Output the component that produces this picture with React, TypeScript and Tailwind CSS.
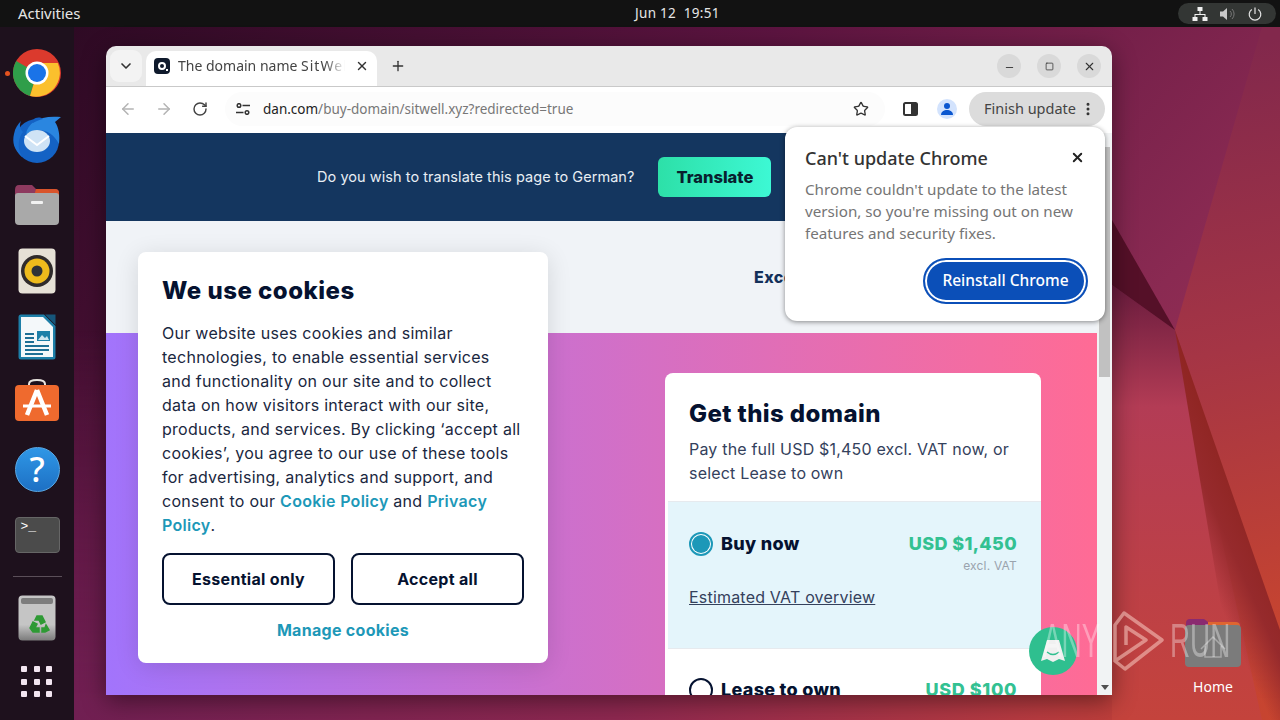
import React from "react";
import { ArrowLeft, ArrowRight, ChevronDown, Minus, MoreVertical, Plus, RotateCw, Square, Star, X } from "lucide-react";

const uiFont = "font-['Noto_Sans',sans-serif]";
const pageFont = "font-['Inter',sans-serif]";

const ChromeIcon = () => (
  <svg width="48" height="48" viewBox="0 0 48 48">
    <circle cx="24" cy="24" r="24" fill="#db3a2d" />
    <path d="M24 24 L3.2 12 A24 24 0 0 0 17 47 Z" fill="#2f9e4a" />
    <path d="M24 14 H44.8 A24 24 0 0 1 17 47 L24 24 Z" fill="#fbc02d" />
    <circle cx="24" cy="24" r="11.5" fill="#fff" />
    <circle cx="24" cy="24" r="9" fill="#1a73e8" />
  </svg>
);

const ThunderbirdIcon = () => (
  <svg width="50" height="50" viewBox="0 0 50 50">
    <circle cx="25" cy="27" r="22" fill="#1462c4" />
    <path d="M9 7 C7 12 8 15 11 18 C6 24 5 34 10 43 C2 36 0 28 2 20 C3 14 6 10 9 7 Z" fill="#1a6fd0" />
    <path d="M14 20 C16 8 28 1 49 3 L43 8 C47 14 48 22 47 30 C40 16 26 12 14 20 Z" fill="#2a86e0" />
    <path d="M21 6 C24 3 28 3 31 5 C27 6 24 7 21 9 Z" fill="#1462c4" />
    <ellipse cx="25" cy="27" rx="13" ry="11" fill="#cfe3f5" />
    <path d="M13 22 L25 31 L37 22" fill="none" stroke="#ffffff" strokeWidth="2" />
  </svg>
);

const FilesIcon = () => (
  <svg width="46" height="42" viewBox="0 0 46 42">
    <path d="M1 6 Q1 1 5 1 H18 L22 5 H41 Q45 5 45 9 V20 H1 Z" fill="#8e3a5f" />
    <path d="M22 5 H41 Q45 5 45 9 V12 H20 Z" fill="#d9542b" />
    <path d="M1 12 Q1 9 4 9 H42 Q45 9 45 12 V37 Q45 41 41 41 H5 Q1 41 1 37 Z" fill="#a9a9a9" />
    <rect x="17" y="17" width="12" height="3" rx="1" fill="#f2f2f2" />
  </svg>
);

const RhythmboxIcon = () => (
  <svg width="38" height="46" viewBox="0 0 38 46">
    <rect width="37" height="45" x="0.5" y="0.5" rx="4" fill="#e6e1d6" />
    <circle cx="19" cy="23" r="16" fill="#2f2b2b" />
    <circle cx="19" cy="23" r="12.5" fill="#eebb1c" />
    <circle cx="19" cy="23" r="5.5" fill="#2e3238" />
  </svg>
);

const WriterIcon = () => (
  <svg width="38" height="46" viewBox="0 0 38 46">
    <path d="M3 0.5 H26 L37.5 12 V43 Q37.5 45.5 35 45.5 H3 Q0.5 45.5 0.5 43 V3 Q0.5 0.5 3 0.5 Z" fill="#1d7fa8" />
    <path d="M3 3 H25 L35 13 V43 H3 Z" fill="#f4f8fa" />
    <path d="M27 0.5 L37.5 11 V0.5 Z" fill="#16567a" />
    <rect x="19" y="17" width="13" height="10" fill="#1d7fa8" />
    <path d="M20 26 L24 21 L27 24 L29 22 L31 26 Z" fill="#cfe6f0" />
    <path d="M7 20h9M7 24h9M7 28h9M7 32h24M7 36h24M7 40h18" stroke="#1d6f95" strokeWidth="2" />
  </svg>
);

const AppCenterIcon = () => (
  <svg width="46" height="42" viewBox="0 0 46 42">
    <path d="M15 7 V5 Q15 1 23 1 Q31 1 31 5 V7" fill="none" stroke="#e8e4df" strokeWidth="2" />
    <rect x="1" y="6" width="44" height="36" rx="4" fill="#ef6a2e" />
    <path d="M23 11 L13 36 M23 11 L33 36" stroke="#fff" strokeWidth="4.500" />
    <path d="M9 27 H37" stroke="#fff" strokeWidth="3" />
  </svg>
);

const TrashIcon = () => (
  <svg width="38" height="46" viewBox="0 0 38 46">
    <defs>
      <linearGradient id="trash" x1="0" y1="0" x2="0" y2="1">
        <stop offset="0.65" stopColor="#c5c5c5" />
        <stop offset="1" stopColor="#7b7b7b" />
      </linearGradient>
    </defs>
    <rect x="0.5" y="0.5" width="37" height="45" rx="4" fill="url(#trash)" />
    <rect x="3" y="3" width="32" height="6" rx="2" fill="#7d7d7d" />
    <path d="M19 21 L24 21 L27 27 L23 29 L21 25 L17 25 Z M12 33 L15 27 L19 29 L17 33 L21 33 L21 37 L15 37 Z M28 30 L31 35 L27 37 L24 37 L24 33 L27 33 Z" fill="#2f9a35" stroke="#2f9a35" strokeWidth="1.5" />
  </svg>
);

const DockItem = ({ children, className = "h-[66px]" }: { children: React.ReactNode; className?: string }) => (
  <div className={`flex items-center justify-center ${className}`}>{children}</div>
);

const Dock = () => (
  <div className="relative flex w-[74px] shrink-0 flex-col bg-[#1e111d] pt-[13px]">
    <div className="absolute left-[5px] top-[44px] h-[5px] w-[5px] rounded-full bg-[#e5531f]" />
    <DockItem><ChromeIcon /></DockItem>
    <DockItem><ThunderbirdIcon /></DockItem>
    <DockItem><FilesIcon /></DockItem>
    <DockItem><RhythmboxIcon /></DockItem>
    <DockItem><WriterIcon /></DockItem>
    <DockItem className="h-[66px] pb-[6px]"><AppCenterIcon /></DockItem>
    <DockItem>
      <div className={`flex h-[45px] w-[45px] items-center justify-center rounded-full border border-[#5aa9e6] bg-[linear-gradient(#2f97e6,#1d70c4)] text-[34px] font-medium text-white ${uiFont}`}>?</div>
    </DockItem>
    <DockItem>
      <div className="h-[36px] w-[45px] rounded-[4px] border border-[#666] bg-[#4b4b4b] pl-[5px] pt-[1px] font-['Liberation_Mono',monospace] text-[13px] leading-[16px] text-white">&gt;_</div>
    </DockItem>
    <div className="mx-auto mt-[8px] h-px w-[49px] bg-[#5b4f59]" />
    <DockItem className="mt-[8px] h-[66px]"><TrashIcon /></DockItem>
    <div className="mt-[15px] grid h-[32px] w-[32px] grid-cols-3 gap-[6px] self-center">
      {Array.from({ length: 9 }).map((_, i) => (
        <div key={i} className="h-[6px] w-[6px] rounded-[1px] bg-[#f3e6f1]" />
      ))}
    </div>
  </div>
);

const TopBar = () => (
  <div className={`relative flex h-[27px] shrink-0 items-center justify-between bg-[#121212] pl-[18px] pr-[4px] text-[13.5px] text-[#e6e6e6] ${uiFont}`}>
    <span className="text-[15px]">Activities</span>
    <span className="absolute left-[635px] tracking-[0.3px]">Jun 12&nbsp; 19:51</span>
    <div className="flex h-[21px] w-[98px] items-center justify-between rounded-full bg-[#333634] px-[14px]">
      <svg width="16" height="14" viewBox="0 0 16 14" fill="#f0f0f0">
        <rect x="5.5" y="0" width="5" height="4" />
        <rect x="0.5" y="10" width="5" height="4" />
        <rect x="10.5" y="10" width="5" height="4" />
        <path d="M7.5 4h1v3h5v3h-1V8H3.500v2h-1V7h5z" />
      </svg>
      <svg width="16" height="14" viewBox="0 0 16 14">
        <path d="M0 4.500h3L7 1v12L3 9.500H0z" fill="#c9c9c9" />
        <path d="M10 4a4 4 0 0 1 0 6M12 2a7 7 0 0 1 0 10" fill="none" stroke="#777" />
      </svg>
      <svg width="14" height="14" viewBox="0 0 14 14" fill="none" stroke="#e6e6e6" strokeWidth="1.2">
        <path d="M7 0.500V7M3.800 2.500a5.800 5.800 0 1 0 6.400 0" />
      </svg>
    </div>
  </div>
);

const Wallpaper = () => (
  <svg className="absolute inset-0 h-full w-full" viewBox="74 27 1206 693" preserveAspectRatio="none">
    <defs>
      <linearGradient id="wall" x1="0" y1="0" x2="1" y2="0.55">
        <stop offset="0" stopColor="#2e0a24" />
        <stop offset="0.45" stopColor="#5c1440" />
        <stop offset="0.85" stopColor="#8a2a52" />
        <stop offset="1" stopColor="#963054" />
      </linearGradient>
      <linearGradient id="wallBottom" gradientUnits="userSpaceOnUse" x1="74" y1="0" x2="1280" y2="0">
        <stop offset="0" stopColor="#701f52" />
        <stop offset="0.45" stopColor="#8e2850" />
        <stop offset="0.8" stopColor="#b83b40" />
        <stop offset="1" stopColor="#c8452f" />
      </linearGradient>
      <linearGradient id="fadeDown" gradientUnits="userSpaceOnUse" x1="0" y1="330" x2="0" y2="700">
        <stop offset="0" stopColor="#000" />
        <stop offset="1" stopColor="#fff" />
      </linearGradient>
      <mask id="bottomMask" maskUnits="userSpaceOnUse" x="74" y="27" width="1206" height="693">
        <rect x="74" y="27" width="1206" height="693" fill="url(#fadeDown)" />
      </mask>
      <linearGradient id="wallRight" gradientUnits="userSpaceOnUse" x1="1170" y1="60" x2="1290" y2="640">
        <stop offset="0" stopColor="#82284c" />
        <stop offset="0.5" stopColor="#a53545" />
        <stop offset="1" stopColor="#c8452f" />
      </linearGradient>
      <linearGradient id="wallPink" x1="0" y1="0" x2="0" y2="1">
        <stop offset="0" stopColor="#6a1c3e" />
        <stop offset="0.28" stopColor="#b33c55" />
        <stop offset="1" stopColor="#c4433c" />
      </linearGradient>
      <linearGradient id="band" gradientUnits="userSpaceOnUse" x1="1200" y1="560" x2="1268" y2="530">
        <stop offset="0" stopColor="#962a2c" stopOpacity="0" />
        <stop offset="0.45" stopColor="#962a2c" />
        <stop offset="1" stopColor="#8e2420" />
      </linearGradient>
    </defs>
    <rect x="74" y="27" width="1206" height="693" fill="url(#wall)" />
    <rect x="74" y="27" width="1206" height="693" fill="url(#wallBottom)" mask="url(#bottomMask)" />
    <polygon points="1262,27 1280,27 1280,640 1175,330" fill="url(#wallRight)" />
    <polygon points="1112,285 1175,330 1262,720 1112,720" fill="url(#wallPink)" />
    <polygon points="1175,330 1280,630 1280,720 1240,720" fill="url(#band)" />
    <polygon points="1112,220 1175,330 1112,285" fill="#551028" />
  </svg>
);

const TabStrip = () => (
  <div className={`flex h-[41px] shrink-0 items-end border-b border-[#c9c9c9] bg-[#e9e9e9] pl-[4px] ${uiFont}`}>
    <div className="mb-[4px] flex h-[32px] w-[32px] items-center justify-center rounded-[9px] bg-[#f3f3f3]">
      <ChevronDown size={16} strokeWidth={2.5} className="text-[#333]" />
    </div>
    <div className="ml-[4px] flex h-[35px] w-[231px] items-center rounded-t-[10px] bg-white pb-[6px] pl-[8px] pr-[7px]">
      <div className="relative flex h-[16px] w-[16px] shrink-0 items-center justify-center rounded-[4px] bg-[#0f1a2c]">
        <div className="h-[8px] w-[8px] rounded-full border-2 border-white" />
        <div className="absolute bottom-[3px] right-[2px] h-[2px] w-[2px] bg-white" />
      </div>
      <div className="ml-[8px] w-[167px] overflow-hidden whitespace-nowrap text-[14px] text-[#444] [mask-image:linear-gradient(to_right,#000_88%,transparent)]">The domain name <span className="tracking-[1px]">SitWell.xyz</span> is for sale</div>
      <X size={14} strokeWidth={2.5} className="ml-[10px] shrink-0 text-[#333]" />
    </div>
    <div className="mb-[12px] ml-[13px]">
      <Plus size={16} strokeWidth={2} className="text-[#333]" />
    </div>
    <div className="mb-[8px] ml-auto mr-[11px] flex gap-[16px]">
      <div className="flex h-[24px] w-[24px] items-center justify-center rounded-full bg-[#d9d9d9]"><Minus size={11} className="mt-[3px] text-[#333]" /></div>
      <div className="flex h-[24px] w-[24px] items-center justify-center rounded-full bg-[#d9d9d9]"><Square size={9} className="text-[#333]" /></div>
      <div className="flex h-[24px] w-[24px] items-center justify-center rounded-full bg-[#d9d9d9]"><X size={13} className="text-[#333]" /></div>
    </div>
  </div>
);

const Toolbar = () => (
  <div className={`flex h-[46px] shrink-0 items-center bg-white pb-[2px] pl-[13px] pr-[7px] ${uiFont}`}>
    <ArrowLeft size={18} className="text-[#b4b4b4]" />
    <ArrowRight size={18} className="ml-[18px] text-[#b4b4b4]" />
    <RotateCw size={16} strokeWidth={2.2} className="ml-[19px] text-[#444]" />
    <div className="ml-[17px] flex h-[34px] w-[660px] items-center rounded-full bg-[#fcfcfc] pl-[11px] pr-[16px]">
      <svg width="14" height="12" viewBox="0 0 14 12" fill="none" stroke="#333" strokeWidth="1.5">
        <circle cx="3" cy="2.500" r="1.800" />
        <path d="M6.500 2.500H14M0 9.500h7.500" />
        <circle cx="11" cy="9.500" r="1.800" />
      </svg>
      <span className="ml-[13px] text-[13.5px] text-[#777]"><span className="text-[#222]">dan.com</span>/buy-domain/sitwell.xyz?redirected=true</span>
      <Star size={16} strokeWidth={2} className="ml-auto text-[#333]" />
    </div>
    <svg className="ml-[18px]" width="15" height="14" viewBox="0 0 15 14">
      <rect x="1" y="1" width="13" height="12" rx="1.500" fill="#fff" stroke="#333" strokeWidth="2" />
      <rect x="8" y="1" width="6" height="12" fill="#333" />
    </svg>
    <div className="ml-[19px] flex h-[20px] w-[20px] items-center justify-center rounded-full bg-[#d3e3fd]">
      <svg width="14" height="14" viewBox="0 0 14 14" fill="#0b57d0">
        <circle cx="7" cy="4" r="3" />
        <path d="M1 13c0-3.500 3-5 6-5s6 1.500 6 5z" />
      </svg>
    </div>
    <div className="ml-[12px] flex h-[34px] w-[136px] items-center rounded-full bg-[#dcdcdc] pl-[15px] text-[14.5px] text-[#444]">
      Finish update
      <MoreVertical size={16} strokeWidth={2.5} className="ml-[4px] text-[#333]" />
    </div>
  </div>
);

const Scrollbar = () => (
  <div className="flex w-[15px] shrink-0 flex-col items-center bg-[#f1f3f4] pt-[14px]">
    <div className="h-[230px] w-[11px] bg-[#c1c1c1]" />
    <div className="mb-[5px] mt-auto h-0 w-0 border-x-[4px] border-t-[5px] border-x-transparent border-t-[#505050]" />
  </div>
);

const DomainCard = () => (
  <div className="h-[400px] w-[376px] shrink-0 rounded-lg bg-white text-[#101b35]">
    <div className="px-6 pt-[25px]">
      <h2 className="text-[24px] font-extrabold leading-[32px] tracking-[0.4px] text-[#051230]">Get this domain</h2>
      <p className="mt-[7px] text-[16px] leading-[24px] tracking-[0.19px] text-[#34415c]">Pay the full USD $1,450 excl. VAT now, or select Lease to own</p>
    </div>
    <div className="ml-[3px] mt-[16px] h-[148px] border-y border-[#e6eaee] bg-[#e4f5fb] pl-[21px] pr-6 pt-[28px]">
      <div className="flex items-center">
        <div className="flex h-[24px] w-[24px] items-center justify-center rounded-full border-2 border-[#1d98b8] bg-white">
          <div className="h-[18px] w-[18px] rounded-full bg-[#1d98b8]" />
        </div>
        <span className="ml-[8px] text-[18px] font-extrabold tracking-[0.3px] text-[#051230]">Buy now</span>
        <span className="ml-auto text-[18px] font-extrabold tracking-[0.35px] text-[#33c192]">USD $1,450</span>
      </div>
      <div className="mt-[1px] text-right text-[12px] leading-[16px] tracking-[0.2px] text-[#9aa3ad]">excl. VAT</div>
      <div className="mt-[11px] text-[16px] leading-[24px] tracking-[0.2px] text-[#34415c] underline">Estimated VAT overview</div>
    </div>
    <div className="flex items-center px-6 pt-[27px]">
      <div className="h-[24px] w-[24px] rounded-full border-2 border-[#051230]" />
      <span className="ml-[8px] text-[18px] font-extrabold tracking-[0.3px] text-[#051230]">Lease to own</span>
      <span className="ml-auto text-[18px] font-extrabold tracking-[0.6px] text-[#33c192]">USD $100</span>
    </div>
  </div>
);

const CookieCard = () => (
  <div className={`absolute left-[32px] top-[206px] h-[411px] w-[410px] rounded-lg bg-white px-6 pt-[23px] text-[#1a2740] shadow-[0_4px_24px_rgba(0,0,0,0.12)] ${pageFont}`}>
    <h2 className="text-[24px] font-extrabold leading-[32px] tracking-[0.5px] text-[#051230]">We use cookies</h2>
    <p className="mt-[14px] pr-[2px] text-[16px] leading-[24px] tracking-[0.28px]">
      Our website uses cookies and similar technologies, to enable essential services and functionality on our site and to collect data on how visitors interact with our site, products, and services. By clicking ‘accept all cookies’, you agree to our use of these tools for advertising, analytics and support, and consent to our{" "}
      <span className="font-semibold text-[#1d98b8]">Cookie Policy</span> and{" "}
      <span className="font-semibold text-[#1d98b8]">Privacy Policy</span>.
    </p>
    <div className="mt-[16px] flex gap-4">
      <div className="flex h-[52px] w-[173px] items-center justify-center rounded-lg border-2 border-[#051230] text-[16px] font-bold tracking-[0.3px] text-[#051230]">Essential only</div>
      <div className="flex h-[52px] w-[173px] items-center justify-center rounded-lg border-2 border-[#051230] text-[16px] font-bold tracking-[0.3px] text-[#051230]">Accept all</div>
    </div>
    <div className="mt-[13px] text-center text-[16px] font-bold leading-[24px] tracking-[0.3px] text-[#1d98b8]">Manage cookies</div>
  </div>
);

const UpdatePopup = () => (
  <div className={`absolute left-[679px] top-[81px] h-[194px] w-[320px] rounded-[12px] bg-white px-5 pt-[18px] shadow-[0_1px_5px_rgba(0,0,0,0.45)] ${uiFont}`}>
    <div className="flex items-center justify-between">
      <span className="text-[18px] font-medium leading-[26px] text-[#333]">Can't update Chrome</span>
      <X size={15} strokeWidth={3} className="-mt-[1px] text-[#222]" />
    </div>
    <p className="mt-[7px] text-[15.200px] leading-[22px] text-[#757575]">Chrome couldn't update to the latest version, so you're missing out on new features and security fixes.</p>
    <div className="mt-[16px] flex justify-end">
      <div className="-mr-[1px] flex h-[42px] w-[161px] items-center justify-center rounded-full bg-[#0b4fb8] text-[15.500px] font-medium text-white shadow-[inset_0_0_0_2px_#fff] outline outline-2 outline-[#0b4fb8]">Reinstall Chrome</div>
    </div>
  </div>
);

const ChatButton = () => (
  <div className="absolute left-[923px] top-[581px] flex h-[48px] w-[48px] items-center justify-center rounded-full bg-[#2fbf8f]">
    <svg width="26" height="24" viewBox="0 0 26 24">
      <path d="M7 1 H19 L25 22 L19 20 L13 23 L7 20 L1 22 Z" fill="#f0f0f0" />
      <path d="M7 13 Q13 18 19 13" fill="none" stroke="#2fbf8f" strokeWidth="1.5" />
    </svg>
  </div>
);

const BrowserWindow = () => (
  <div className="absolute left-[32px] top-[19px] flex h-[649px] w-[1006px] flex-col rounded-t-[10px] shadow-[0_6px_24px_rgba(0,0,0,0.45)]">
    <div className="flex flex-1 flex-col overflow-hidden rounded-t-[10px]">
      <TabStrip />
      <Toolbar />
      <div className={`flex min-h-0 flex-1 ${pageFont}`}>
        <div className="flex min-w-0 flex-1 flex-col">
          <div className="flex h-[88px] shrink-0 items-center bg-[#14365f] pl-[211px]">
            <span className="text-[14.500px] tracking-[0.05px] text-[#e8eef4]">Do you wish to translate this page to German?</span>
            <div className="ml-[24px] flex h-[40px] w-[113px] items-center justify-center rounded-[6px] bg-[linear-gradient(to_right,#2de0a8,#3df8d4)] text-[16.500px] font-extrabold text-[#08202e]">Translate</div>
          </div>
          <div className="flex h-[112px] shrink-0 items-center overflow-hidden bg-[#f0f3f7] pl-[648px]">
            <span className="text-[16px] font-extrabold tracking-[0.4px] text-[#14305a]">Excellent</span>
          </div>
          <div className="flex min-h-0 flex-1 justify-end overflow-hidden bg-[linear-gradient(to_right,#a274fc,#ff6b95)] pr-[56px] pt-[40px]">
            <DomainCard />
          </div>
        </div>
        <Scrollbar />
      </div>
    </div>
    <CookieCard />
    <UpdatePopup />
    <ChatButton />
  </div>
);

const HomeIcon = () => (
  <div className="absolute left-[1105px] top-[590px] flex w-[68px] flex-col items-center">
    <svg width="58" height="50" viewBox="0 0 58 50">
      <path d="M2 6 Q2 2 6 2 H20 L24 5 H52 Q56 5 56 9 V14 H2 Z" fill="#8a2a70" />
      <path d="M24 5 H52 Q56 5 56 9 V12 H24 Z" fill="#df6530" />
      <rect x="1" y="8" width="56" height="42" rx="4" fill="#7b7b7b" />
      <path d="M17 32 L29 20 L41 32 M21 29 V40 H37 V29" fill="none" stroke="#a9a9a9" strokeWidth="1.5" />
    </svg>
    <span className={`mt-[9px] text-[14px] text-white ${uiFont}`}>Home</span>
  </div>
);

const Watermark = () => (
  <div className="pointer-events-none absolute left-[969px] top-[584px] flex h-[60px] items-center font-['Liberation_Sans',sans-serif] text-[48px] leading-[60px] text-white/35">
    <span className="w-[69px] origin-left scale-x-[0.58]">ANY</span>
    <svg width="52" height="60" viewBox="0 0 52 60" fill="none" stroke="#ffd9d0" strokeOpacity="0.5" strokeWidth="3.500" strokeLinejoin="round">
      <path d="M3 50 V14 L12 2 L50 29 L13 58 L3 50 L34 29 L14 16 V34" />
    </svg>
    <span className="ml-[6px] w-[60px] origin-left scale-x-[0.58]">RUN</span>
  </div>
);

export default function App() {
  return (
    <div className="flex h-screen w-full flex-col overflow-hidden">
      <TopBar />
      <div className="flex min-h-0 flex-1">
        <Dock />
        <div className="relative flex-1">
          <Wallpaper />
          <BrowserWindow />
          <HomeIcon />
          <Watermark />
        </div>
      </div>
    </div>
  );
}
